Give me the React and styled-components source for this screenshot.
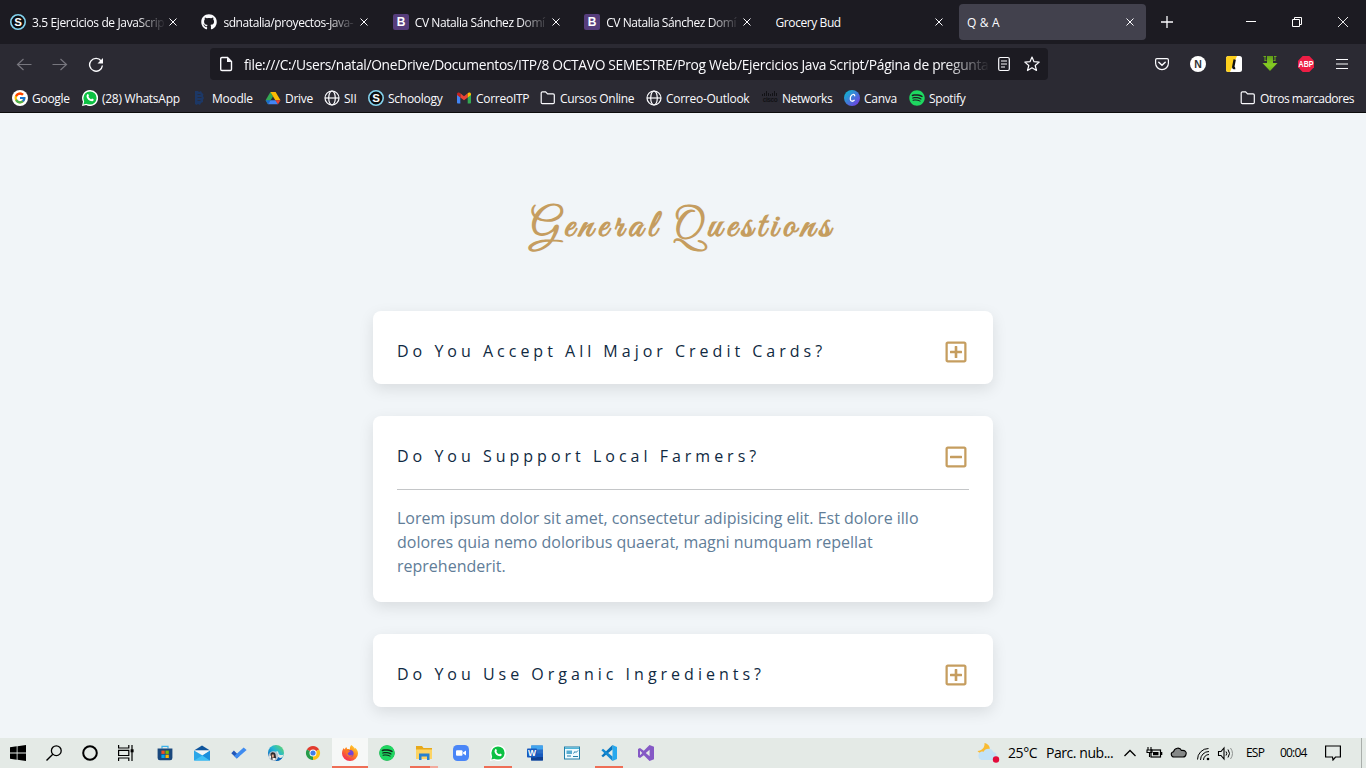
import React from "react";
import styled, { createGlobalStyle, css } from "styled-components";
import { FcGoogle } from "react-icons/fc";
import {
  FaGithub,
  FaSpotify,
  FaRegPlusSquare,
  FaRegMinusSquare,
} from "react-icons/fa";

const GlobalStyle = createGlobalStyle`
  * { box-sizing: border-box; }
  html, body { margin: 0; padding: 0; }
  body {
    width: 1366px;
    height: 768px;
    overflow: hidden;
    background: #f1f5f8;
    font-family: "Open Sans", "Noto Sans", sans-serif;
  }
  svg { display: block; flex: none; }
`;

const Screen = styled.div`
  width: 1366px;
  height: 768px;
  display: flex;
  flex-direction: column;
`;

/* ---------- browser chrome ---------- */

const TabBar = styled.div`
  height: 44px;
  flex: none;
  display: flex;
  align-items: flex-start;
  padding: 4px 0 0 2px;
  background: #1c1b22;
  color: #fbfbfe;
`;

const Tab = styled.div`
  width: 187px;
  height: 36px;
  margin-right: 4.4px;
  padding: 0 9px 0 8px;
  display: flex;
  align-items: center;
  gap: 6px;
  flex: none;
  border-radius: 4px;
  background: ${(p) => (p.$active ? "#42414d" : "transparent")};
`;

const TabTitle = styled.span`
  flex: 1;
  min-width: 0;
  overflow: hidden;
  white-space: nowrap;
  padding-top: 1px;
  font-size: 12px;
  line-height: 18px;
  letter-spacing: ${(p) => p.$ls ?? -0.42}px;
  ${(p) =>
    p.$fade &&
    css`
      mask-image: linear-gradient(to left, transparent 0, #000 30px);
    `}
`;

const TabClose = styled.div`
  width: 14px;
  display: flex;
  justify-content: center;
  margin-left: -6px;
`;

const NewTab = styled.div`
  height: 36px;
  width: 34px;
  display: flex;
  align-items: center;
  justify-content: center;
`;

const WindowButtons = styled.div`
  margin-left: auto;
  height: 36px;
  display: flex;
`;

const WindowButton = styled.div`
  width: 46px;
  display: flex;
  align-items: center;
  justify-content: center;
`;

const NavBar = styled.div`
  height: 40px;
  flex: none;
  display: flex;
  align-items: center;
  background: #2b2a33;
  color: #fbfbfe;
`;

const NavButtons = styled.div`
  width: 210px;
  padding-left: 16px;
  display: flex;
  gap: 20px;
`;

const AddressBar = styled.div`
  width: 838px;
  height: 32px;
  padding: 0 7px 0 8px;
  display: flex;
  align-items: center;
  border-radius: 4px;
  background: #1c1b22;
`;

const Address = styled.span`
  width: 746px;
  margin: 1px 6px 0 10px;
  overflow: hidden;
  white-space: nowrap;
  font-size: 13.8px;
  line-height: 20px;
  letter-spacing: -0.315px;
  mask-image: linear-gradient(to left, transparent 0, #000 45px);
`;

const AddressActions = styled.div`
  display: flex;
  gap: 12px;
`;

const Extensions = styled.div`
  margin-left: auto;
  padding-right: 16px;
  display: flex;
  align-items: center;
  gap: 20px;
`;

const Bookmarks = styled.div`
  height: 29px;
  flex: none;
  display: flex;
  align-items: center;
  padding: 0 12px;
  background: #2b2a33;
  border-bottom: 1px solid #0c0c0d;
  color: #fbfbfe;
`;

const Bookmark = styled.div`
  width: ${(p) => (p.$w ? p.$w + "px" : "auto")};
  display: flex;
  align-items: center;
  gap: 4px;
  flex: none;
  white-space: nowrap;
  font-size: 12px;
  line-height: 18px;
  letter-spacing: ${(p) => p.$ls || -0.27}px;
`;

const BookmarkLabel = styled.span`
  padding-top: 1px;
`;

const Spacer = styled.div`
  flex: 1;
`;

/* ---------- page ---------- */

const Page = styled.main`
  flex: 1;
  min-height: 0;
  overflow: hidden;
  background: #f1f5f8;
  display: flex;
  flex-direction: column;
  align-items: center;
`;

const Heading = styled.h2`
  margin: 80px 0 0;
  height: 118px;
  padding-top: 6px;
  font-family: "Great Vibes", "Liberation Serif", cursive;
  font-weight: 700;
  font-size: 40px;
  line-height: 56px;
  letter-spacing: 5px;
  color: #c59d5f;
  white-space: nowrap;
`;

const Questions = styled.section`
  width: 620px;
  display: flex;
  flex-direction: column;
  gap: 32px;
`;

const Card = styled.article`
  padding: 24px 24px ${(p) => (p.$open ? 24 : 0)}px;
  min-height: 73px;
  background: #fff;
  border-radius: 8px;
  box-shadow: 0 5px 15px rgba(0, 0, 0, 0.1);
`;

const CardHead = styled.div`
  height: 32px;
  display: flex;
  align-items: center;
  justify-content: space-between;
  color: #102a42;
  font-size: 16px;
  letter-spacing: 4px;
  white-space: nowrap;
`;

const Toggle = styled.span`
  height: 24px;
  margin: 2px 1px 0 0;
  color: #c59d5f;
  font-size: 24px;
`;

const Answer = styled.p`
  margin: 17px 0 0;
  padding-top: 16px;
  border-top: 1px solid #c4c6c8;
  color: #617d98;
  font-size: 16px;
  line-height: 24px;
`;

/* ---------- task bar ---------- */

const TaskBar = styled.footer`
  height: 30px;
  flex: none;
  display: flex;
  background: #e4eae6;
  color: #000;
`;

const SystemButtons = styled.div`
  width: 147px;
  display: flex;
`;

const TaskCell = styled.div`
  width: 36px;
  display: flex;
  align-items: center;
  justify-content: center;
`;

const AppCell = styled.div`
  width: 36px;
  height: 30px;
  margin-right: 1px;
  padding-top: 7px;
  display: flex;
  flex-direction: column;
  align-items: center;
  justify-content: space-between;
  background: ${(p) => (p.$active ? "#f6f8f7" : "transparent")};
`;

const Running = styled.div`
  width: ${(p) => (p.$wide ? 36 : 28)}px;
  height: 2px;
  background: ${(p) =>
    p.$stacked
      ? "linear-gradient(to right, #ee6e56 20px, #f2aa9c 20px)"
      : "#ee6e56"};
`;

const Tray = styled.div`
  margin-left: auto;
  display: flex;
  align-items: center;
  white-space: nowrap;
`;

const TrayItem = styled.div`
  width: ${(p) => p.$w}px;
  font-size: ${(p) => p.$size || 12}px;
  letter-spacing: ${(p) => p.$ls || 0}px;
  line-height: 20px;
`;

const DesktopEdge = styled.div`
  width: 5px;
  height: 30px;
  border-left: 1px solid #a9aeab;
`;

/* ---------- icons ---------- */

const Icon = ({ s = 16, box = 16, children }) => (
  <svg width={s} height={s} viewBox={`0 0 ${box} ${box}`} fill="none">
    {children}
  </svg>
);

const Cross = ({ s = 8 }) => (
  <Icon s={s} box={8}>
    <path d="M.5.5l7 7M7.5.5l-7 7" stroke="#fbfbfe" strokeWidth="1" />
  </Icon>
);

const Letter = styled.text`
  font-family: "Liberation Sans", sans-serif;
  font-weight: bold;
  text-anchor: middle;
`;

const SchoologyIcon = () => (
  <Icon>
    <circle cx="8" cy="8" r="7.2" fill="#0c0d10" stroke="#84d3ee" strokeWidth="1.6" />
    <Letter x="8" y="12" fontSize="11.5" fill="#fff">S</Letter>
  </Icon>
);

const BootstrapIcon = () => (
  <Icon>
    <rect width="16" height="16" rx="2" fill="#563d7c" />
    <Letter x="8.2" y="12" fontSize="12" fill="#fff">B</Letter>
  </Icon>
);

const WhatsAppIcon = () => (
  <Icon>
    <path d="M8 0a8 8 0 1 1-3.800 15L0 16l1-4.200A8 8 0 0 1 8 0z" fill="#fff" />
    <circle cx="8" cy="8" r="6.600" fill="#0dc143" />
    <path d="M1.400 14.600l1.100-4 3 3z" fill="#0dc143" />
    <path
      d="M5.200 4.400c.5-.5 1-.4 1.200.1l.5 1.200c.1.3-.5.9-.5 1.100.7 1.300 1.400 1.900 2.600 2.500.3.1.8-.9 1.100-.8l1.400.7c.4.3.1 1.100-.3 1.500-.6.6-1.500.7-2.400.4C6.900 10.500 5.300 9 4.700 7.200c-.3-1 0-2.200.5-2.800z"
      fill="#fff"
    />
  </Icon>
);

const GoogleIcon = () => (
  <Icon>
    <circle cx="8" cy="8" r="8" fill="#fff" />
    <g transform="translate(1.500 1.500)">
      <FcGoogle size={13} />
    </g>
  </Icon>
);

const MoodleIcon = () => (
  <Icon>
    <path d="M3 1h3l1 1 2-1 1 2 1.500 1-.5 2 1 2-1 2v2l-2 1-1 2-2-1-1.500 1L3 14z" fill="#1c3765" />
    <path d="M5.500 4.500h3M5.500 7.500h4M5.500 10.500h3" stroke="#2b2a33" strokeWidth=".8" />
  </Icon>
);

const DriveIcon = () => (
  <Icon>
    <path d="M5.400 2h5.200L8 6.500z" fill="#188038" />
    <path d="M5.400 2L.6 10.300l2.300 3.900L8 6.500z" fill="#34a853" />
    <path d="M10.600 2l4.900 8.300h-5.200L5.400 2z" fill="#fbbc04" />
    <path d="M.6 10.300h4.900L3 14.200z" fill="#1967d2" />
    <path d="M5.500 10.300h5L13 14.200H3z" fill="#4285f4" />
    <path d="M10.300 10.300h5.200L13 14.200z" fill="#ea4335" />
  </Icon>
);

const GlobeIcon = () => (
  <Icon>
    <g stroke="#fbfbfe" strokeWidth="1.200">
      <circle cx="8" cy="8" r="7" />
      <ellipse cx="8" cy="8" rx="3.300" ry="7" />
      <path d="M1 8h14" />
    </g>
  </Icon>
);

const GmailIcon = () => (
  <Icon>
    <path d="M1 4v8.700c0 .5.4.8.8.8H4.300V6.500z" fill="#4285f4" />
    <path d="M15 4v8.700c0 .5-.4.8-.8.8h-2.500V6.500z" fill="#34a853" />
    <path d="M4.300 3.300L8 6.200l3.700-2.900v4.200L8 10.300 4.300 7.500z" fill="#ea4335" />
    <path d="M1 4c0-1.400 1.500-2 2.500-1.300l.8.600v4.200L1 5z" fill="#c5221f" />
    <path d="M15 4c0-1.400-1.500-2-2.500-1.300l-.8.600v4.200L15 5z" fill="#fbbc04" />
  </Icon>
);

const FolderOutline = () => (
  <Icon>
    <path
      d="M1.200 12.500V3c0-.7.500-1.200 1.200-1.200h3.200l2 2h5.500c.7 0 1.200.5 1.200 1.200v7.500c0 .7-.5 1.200-1.200 1.200H2.400c-.7 0-1.200-.5-1.200-1.200z"
      stroke="#fbfbfe"
      strokeWidth="1.200"
    />
  </Icon>
);

const CiscoIcon = () => (
  <Icon>
    <path
      d="M.5 4v2M2.500 3v3M4.500 1v5M6.500 3v3M8.500 4v2M10.500 3v3M12.500 1v5M14.500 3v3"
      stroke="#121216"
      strokeWidth="1"
    />
    <Letter x="8" y="12" fontSize="6.500" fill="#121216">cisco</Letter>
  </Icon>
);

const CanvaIcon = () => (
  <Icon>
    <defs>
      <linearGradient id="canva" x1="0" y1="0" x2="1" y2="1">
        <stop offset=".15" stopColor="#16acd0" />
        <stop offset=".9" stopColor="#7140e2" />
      </linearGradient>
    </defs>
    <circle cx="8" cy="8" r="8" fill="url(#canva)" />
    <path d="M10.500 6.200c.6-1.400-.5-2.100-1.600-1.700C7.300 5 6.200 7.300 6.300 9.300c.2 2.300 2.400 2.600 4.300.6" stroke="#fff" strokeWidth="1.300" />
  </Icon>
);

const Spotify = ({ dark }) => (
  <Icon>
    <circle cx="8" cy="8" r="7.500" fill={dark} />
    <FaSpotify size={16} color="#1ed760" />
  </Icon>
);

const PocketIcon = () => (
  <Icon>
    <path
      d="M1.600 4c0-.8.5-1.300 1.300-1.300h10.200c.8 0 1.300.5 1.300 1.300v3.200a6.400 6.400 0 0 1-12.800 0z"
      stroke="#fbfbfe"
      strokeWidth="1.200"
    />
    <path d="M4.800 6.200L8 9.200l3.200-3" stroke="#fbfbfe" strokeWidth="1.500" strokeLinecap="round" />
  </Icon>
);

const NIcon = () => (
  <Icon>
    <circle cx="8" cy="8" r="8" fill="#fff" />
    <Letter x="8" y="11.800" fontSize="10.500" fill="#333">N</Letter>
  </Icon>
);

const LIcon = () => (
  <Icon>
    <rect width="16" height="16" rx="2.500" fill="#fff" />
    <path d="M2.500 0H11L4 16H2.500A2.500 2.500 0 0 1 0 13.500v-11A2.500 2.500 0 0 1 2.500 0z" fill="#fdd01d" />
    <path d="M8.700 3.500L7.200 11c0 1 .5 1.300 2 1" stroke="#111" strokeWidth="2.400" />
  </Icon>
);

const DownloadArrow = () => (
  <Icon>
    <defs>
      <linearGradient id="arrow" x1="0" y1="0" x2="0" y2="1">
        <stop offset="0" stopColor="#5f9c17" />
        <stop offset=".6" stopColor="#86cc24" />
        <stop offset="1" stopColor="#6bb01c" />
      </linearGradient>
    </defs>
    <path d="M5 0h6v7h4.500L8 15 .5 7H5z" fill="url(#arrow)" />
    <path d="M1.500.5H4M12 .5h2.500M2.500 4.500h2M11.500 4.500h2" stroke="#6aa81c" />
    <path d="M3 1v3.500M13 1v3.500" stroke="#6aa81c" />
  </Icon>
);

const AbpIcon = () => (
  <Icon>
    <path d="M4.700 0h6.600L16 4.700v6.600L11.300 16H4.700L0 11.300V4.700z" fill="#ed1e45" />
    <g transform="translate(8 11.200) scale(.8 1)">
      <Letter x="0" y="0" fontSize="8.800" fill="#fff">ABP</Letter>
    </g>
  </Icon>
);

const WindowsLogo = () => (
  <Icon>
    <path d="M0 2.300l6.700-1v6.300H0zM7.500 1.200L16 0v7.600H7.500zM0 8.400h6.700v6.300L0 13.700zM7.500 8.400H16V16l-8.500-1.200z" fill="#000" />
  </Icon>
);

const SearchIcon = () => (
  <Icon>
    <circle cx="10.300" cy="5.700" r="4.900" stroke="#000" strokeWidth="1.300" />
    <path d="M6.800 9.200L.5 15.500" stroke="#000" strokeWidth="1.400" />
  </Icon>
);

const TaskViewIcon = () => (
  <Icon>
    <path d="M.6 0v3h10.200V0M.6 16v-3h10.200v3M.6 5.300h10.200v5.200H.6zM14 0v16" stroke="#000" strokeWidth="1.200" />
    <rect x="12.600" y="4.300" width="3" height="3" fill="#000" />
  </Icon>
);

const StoreIcon = () => (
  <Icon>
    <path d="M5 3.500V1.300h6v2.200" stroke="#3cb2ec" strokeWidth="1.200" />
    <path d="M.6 3.500h14.800V13a2.300 2.300 0 0 1-2.300 2.300H2.900A2.300 2.300 0 0 1 .6 13z" fill="#1a487c" />
    <path d="M4.400 5.600h3.300v3.300H4.400z" fill="#f25022" />
    <path d="M8.500 5.600h3.300v3.300H8.500z" fill="#7fba00" />
    <path d="M4.400 9.700h3.300V13H4.400z" fill="#00a4ef" />
    <path d="M8.500 9.700h3.300V13H8.500z" fill="#ffb900" />
  </Icon>
);

const MailIcon = () => (
  <Icon>
    <path d="M0 5.500L8 .4l8 5.100H0z" fill="#0f559c" />
    <path d="M0 5.500h16L8.500 10z" fill="#f3f6f8" />
    <path d="M0 5.500l8.500 5L16 5.800v9.700H0z" fill="#2ba6e8" />
    <path d="M0 15.500l8.500-5 7.500 5z" fill="#40c0f5" />
    <path d="M16 5.800v9.700l-7.500-5z" fill="#1c8fdc" />
  </Icon>
);

const TodoIcon = () => (
  <Icon>
    <path d="M.3 8.200l2.600-2.600L8.400 11 5.800 13.600z" fill="#2257b8" />
    <path d="M5.800 13.600L3.200 11l9.500-8.600 2.900 2.700z" fill="#3f8cf0" />
  </Icon>
);

const EdgeIcon = () => (
  <Icon>
    <defs>
      <linearGradient id="edge" x1="0" y1="1" x2="1" y2="0">
        <stop offset=".2" stopColor="#0b72c5" />
        <stop offset=".55" stopColor="#23b7d5" />
        <stop offset="1" stopColor="#6adb59" />
      </linearGradient>
    </defs>
    <circle cx="8" cy="8" r="8" fill="url(#edge)" />
    <path d="M8.500 6c2.500 0 1.500 3 3 3.700 1.200.6 3 .5 4.200-.2-.5 1.500-1.500 3-2.500 3.800-2 .3-4.200-1.300-4.700-3.300z" fill="#e4eae6" />
    <path d="M9 11c1.500 2 3.500 2.500 5.500 1.500-1.500 2.500-4 3.500-6.500 3.500z" fill="#0d62b5" />
    <circle cx="5.500" cy="11" r="4.800" fill="#b8c5cf" />
    <path d="M2.500 9c.5-2.500 4.500-2.500 5 .5l.5 3-1 3-3.500-.8z" fill="#2e2a2c" />
    <path d="M3.800 9.500h2v3h-2z" fill="#dfa98c" />
    <path d="M4.500 13h3v2.500h-3zM1.500 11h1.500v2H1.500z" fill="#f0f0f0" />
  </Icon>
);

const ChromeIcon = () => (
  <Icon>
    <path d="M8 8L1.900 4.500A7 7 0 0 1 14.100 4.500z" fill="#e23b2e" />
    <path d="M8 8L14.100 4.500A7 7 0 0 1 8 15z" fill="#fbc116" />
    <path d="M8 8v7A7 7 0 0 1 1.900 4.500z" fill="#269b49" />
    <circle cx="8" cy="8" r="3.500" fill="#fff" />
    <circle cx="8" cy="8" r="2.600" fill="#3f7de8" />
  </Icon>
);

const FirefoxIcon = () => (
  <Icon>
    <defs>
      <linearGradient id="fox" x1=".9" y1="0" x2=".2" y2="1">
        <stop offset="0" stopColor="#ffdf3a" />
        <stop offset=".45" stopColor="#ff8a1c" />
        <stop offset="1" stopColor="#f4205c" />
      </linearGradient>
    </defs>
    <path d="M9.200 0c2 1 3.200 2.800 3.500 4 .2-.5.1-1 0-1.500C15 4 16 6.200 16 8.500a8 7.500 0 0 1-16 0C0 6 .8 4.300 1.800 3L2.500 4.500 4.200 2l1 2c1.400 0 2 .1 2.800.4C7.600 3 8.300 1 9.200 0z" fill="url(#fox)" />
    <circle cx="8" cy="8.500" r="3.600" fill="#7344d8" />
    <path d="M3.800 6c1.800-1.200 4-.9 4.800.6-2-.3-1.600 1.700-3 1.700.5 2.500 3.500 3 5.300 1.300C9.600 13.700 3.500 12.500 3.800 6z" fill="#ff7627" />
  </Icon>
);

const ExplorerIcon = () => (
  <Icon>
    <path d="M0 1h6l1.500 2H16v11H0z" fill="#e7a91b" />
    <path d="M0 4.500h16V14H0z" fill="#fcd464" />
    <path d="M3 8.500h10.500V15H11v-3.500H5.500V15H3z" fill="#2781cf" />
  </Icon>
);

const ZoomIcon = () => (
  <Icon>
    <rect width="16" height="16" rx="4.500" fill="#4a86f7" />
    <rect x="3" y="5.200" width="6.500" height="5.600" rx="1" fill="#fff" />
    <path d="M10 7.400l3-2v5.200l-3-2z" fill="#fff" />
  </Icon>
);

const WordIcon = () => (
  <Icon>
    <rect x="4" y=".5" width="12" height="15" rx="1" fill="#2a6cc6" />
    <path d="M4 .5h12V4.500H4z" fill="#41a5ee" />
    <path d="M4 8.500h12v3.500H4z" fill="#185abd" />
    <path d="M4 12h12v3.500H4z" fill="#103f91" />
    <rect x="0" y="3.500" width="10" height="9" rx=".8" fill="#185abd" />
    <Letter x="5" y="11" fontSize="8.500" fill="#fff">W</Letter>
  </Icon>
);

const PanelIcon = () => (
  <Icon>
    <rect x=".5" y="2" width="15" height="12" fill="#eefaff" stroke="#217fa9" />
    <path d="M1 2.500h14v1.500H1z" fill="#50b6d8" />
    <rect x="2.500" y="5.500" width="5.500" height="3.500" fill="#55abd0" />
    <path d="M9.500 8.500l1.500-2 1 1 2-2M3 11h4M9 11.500h5" stroke="#217fa9" />
  </Icon>
);

const VsCodeIcon = () => (
  <Icon>
    <path d="M11.500 0L16 2v12l-4.500 2z" fill="#27a9ee" />
    <path d="M11.500 0v4.500L2 12.200.4 10.800z" fill="#0a76be" />
    <path d="M11.500 16v-4.500L2 3.800.4 5.200z" fill="#1389d2" />
  </Icon>
);

const VisualStudioIcon = () => (
  <Icon>
    <path d="M11.500 0L16 1.800v12.400L11.500 16 5.800 10.200 2 13 0 12V4l2-1 3.800 2.800zM11.600 4.700L7.800 8l3.800 3.300zM2 5.700v4.600L4.300 8z" fill="#8559c5" fillRule="evenodd" />
  </Icon>
);

const WeatherIcon = () => (
  <svg width="24" height="24" viewBox="0 0 24 24" fill="none">
    <path d="M7.500 2c5 1 7 6 3.500 9s-8 2-10.500-1C5 9.500 8 6.500 7.500 2z" fill="#f9bb32" />
    <path d="M4.500 19a4.500 4.500 0 0 1 0-8.500c1 0 1.500 0 2 .3a5.500 5.500 0 0 1 10 .2 4.200 4.200 0 0 1 .5 8z" fill="#c3e2f6" />
    <circle cx="19" cy="18.500" r="3.200" fill="#e30b3b" />
  </svg>
);

const TrayIcons = () => (
  <svg width="112" height="20" viewBox="0 0 112 20" fill="none" stroke="#000">
    <path d="M.5 13l5.500-5.500L11.500 13" strokeWidth="1.300" />
    <rect x="27" y="7" width="9.500" height="7" strokeWidth="1.200" />
    <path d="M29 9h5.500v3.200H29zM37 9h1.300v3H37z" fill="#000" stroke="none" />
    <path d="M24 4v3M27 4v3M23 7h5v2.500h-5zM25.500 9v5" strokeWidth="1.100" />
    <path d="M50 14c-3 0-4-4.500-.5-5.200C50.500 4.500 56 4 57.500 7.500c3.500-.5 5.500 1.500 4.500 4-.4 1.600-1.400 2.500-3 2.500z" fill="#858887" strokeWidth="1.100" />
    <path d="M73.500 16.500a11 11 0 0 1 11-11M76.500 17a8.500 8.500 0 0 1 8.500-8.500M79.500 17a5.500 5.500 0 0 1 5.500-5.500" strokeWidth="1" />
    <circle cx="84" cy="16" r="1.300" fill="#000" stroke="none" />
    <path d="M94.500 8.500H97l3-3.500v11l-3-3.500h-2.500z" strokeWidth="1.100" />
    <path d="M102 8.500q1.500 2 0 4M104 6.500q3 4 0 8" />
    <path d="M106.500 5q4 5.500 0 11" stroke="#8e9290" />
  </svg>
);

/* ---------- data ---------- */

const tabs = [
  { title: "3.5 Ejercicios de JavaScrip", icon: <SchoologyIcon />, fade: true, ls: -0.37 },
  { title: "sdnatalia/proyectos-java-", icon: <FaGithub size={16} />, fade: true },
  { title: "CV Natalia Sánchez Domí", icon: <BootstrapIcon />, fade: true },
  { title: "CV Natalia Sánchez Domí", icon: <BootstrapIcon />, fade: true },
  { title: "Grocery Bud" },
  { title: "Q & A", active: true, ls: 0.2 },
];

const bookmarks = [
  { label: "Google", w: 70, icon: <GoogleIcon /> },
  { label: "(28) WhatsApp", w: 110, icon: <WhatsAppIcon /> },
  { label: "Moodle", w: 73, icon: <MoodleIcon /> },
  { label: "Drive", w: 59, icon: <DriveIcon /> },
  { label: "SII", w: 44, icon: <GlobeIcon /> },
  { label: "Schoology", w: 88, icon: <SchoologyIcon /> },
  { label: "CorreoITP", w: 84, icon: <GmailIcon /> },
  { label: "Cursos Online", w: 106, icon: <FolderOutline />, ls: -0.32 },
  { label: "Correo-Outlook", w: 116, icon: <GlobeIcon /> },
  { label: "Networks", w: 82, icon: <CiscoIcon />, ls: -0.4 },
  { label: "Canva", w: 65, icon: <CanvaIcon /> },
  { label: "Spotify", w: 60, icon: <Spotify dark="#1c1b22" /> },
];

const questions = [
  { title: "Do You Accept All Major Credit Cards?" },
  {
    title: "Do You Suppport Local Farmers?",
    answer:
      "Lorem ipsum dolor sit amet, consectetur adipisicing elit. Est dolore illo dolores quia nemo doloribus quaerat, magni numquam repellat reprehenderit.",
  },
  { title: "Do You Use Organic Ingredients?" },
];

const apps = [
  { id: "store", icon: <StoreIcon /> },
  { id: "mail", icon: <MailIcon /> },
  { id: "todo", icon: <TodoIcon /> },
  { id: "edge", icon: <EdgeIcon /> },
  { id: "chrome", icon: <ChromeIcon /> },
  { id: "firefox", icon: <FirefoxIcon />, running: true, active: true },
  { id: "spotify", icon: <Spotify dark="#10271a" /> },
  { id: "explorer", icon: <ExplorerIcon />, running: true, stacked: true },
  { id: "zoom", icon: <ZoomIcon /> },
  { id: "whatsapp", icon: <WhatsAppIcon />, running: true },
  { id: "word", icon: <WordIcon /> },
  { id: "panel", icon: <PanelIcon /> },
  { id: "vscode", icon: <VsCodeIcon />, running: true },
  { id: "vs", icon: <VisualStudioIcon /> },
];

export default function App() {
  return (
    <Screen>
      <GlobalStyle />
      <TabBar>
        {tabs.map((t, i) => (
          <Tab key={i} $active={t.active}>
            {t.icon}
            <TabTitle $fade={t.fade} $ls={t.ls}>{t.title}</TabTitle>
            <TabClose>
              <Cross />
            </TabClose>
          </Tab>
        ))}
        <NewTab>
          <Icon s={12} box={12}>
            <path d="M6 0v12M0 6h12" stroke="#fbfbfe" strokeWidth="1.300" />
          </Icon>
        </NewTab>
        <WindowButtons>
          <WindowButton>
            <Icon s={10} box={10}>
              <path d="M0 4.500h10" stroke="#fff" />
            </Icon>
          </WindowButton>
          <WindowButton>
            <Icon s={10} box={10}>
              <path d="M.5 2.500h7v7h-7zM2.500 2.500v-2h7v7h-2" stroke="#fff" />
            </Icon>
          </WindowButton>
          <WindowButton>
            <Icon s={10} box={10}>
              <path d="M0 0l10 10M10 0L0 10" stroke="#fff" strokeWidth=".9" />
            </Icon>
          </WindowButton>
        </WindowButtons>
      </TabBar>

      <NavBar>
        <NavButtons>
          <Icon>
            <path d="M15.500 8.500H1.500M7.500 3L1.500 8.500l6 5.500" stroke="#77767e" strokeWidth="1.200" />
          </Icon>
          <Icon>
            <path d="M.5 8.500h14M8.500 3l6 5.500-6 5.500" stroke="#77767e" strokeWidth="1.200" />
          </Icon>
          <Icon>
            <path d="M13.200 5A6.400 6.400 0 1 0 14.400 9.500" stroke="#fbfbfe" strokeWidth="1.400" />
            <path d="M15 2v5.500H9.500z" fill="#fbfbfe" />
          </Icon>
        </NavButtons>
        <AddressBar>
          <Icon>
            <path
              d="M2.700 13.200V2.800c0-.8.5-1.300 1.300-1.300h5.500l4 4v7.700c0 .8-.5 1.300-1.300 1.300H4c-.8 0-1.300-.5-1.300-1.300z"
              stroke="#fbfbfe"
              strokeWidth="1.400"
            />
            <path d="M9 1.500V6h4.500z" fill="#fbfbfe" />
          </Icon>
          <Address>
            file:///C:/Users/natal/OneDrive/Documentos/ITP/8 OCTAVO SEMESTRE/Prog Web/Ejercicios Java Script/Página de pregunta
          </Address>
          <AddressActions>
            <Icon>
              <rect x="2.700" y="1.500" width="10.600" height="13" rx="1.500" stroke="#fbfbfe" strokeWidth="1.200" />
              <path d="M5 5h6M5 8h6M5 11h4" stroke="#fbfbfe" strokeWidth="1.200" />
            </Icon>
            <Icon>
              <path
                d="M8 1l2 4.700 5.200.4-4 3.400 1.300 5L8 11.800l-4.500 2.700 1.300-5-4-3.400L6 5.700z"
                stroke="#fbfbfe"
                strokeWidth="1.200"
                strokeLinejoin="round"
              />
            </Icon>
          </AddressActions>
        </AddressBar>
        <Extensions>
          <PocketIcon />
          <NIcon />
          <LIcon />
          <DownloadArrow />
          <AbpIcon />
          <Icon>
            <path d="M2 3.500h12M2 8h12M2 12.500h12" stroke="#fbfbfe" strokeWidth="1.200" />
          </Icon>
        </Extensions>
      </NavBar>

      <Bookmarks>
        {bookmarks.map((b) => (
          <Bookmark key={b.label} $w={b.w} $ls={b.ls}>
            {b.icon}
            <BookmarkLabel>{b.label}</BookmarkLabel>
          </Bookmark>
        ))}
        <Spacer />
        <Bookmark $ls={-0.48}>
          <FolderOutline />
          <BookmarkLabel>Otros marcadores</BookmarkLabel>
        </Bookmark>
      </Bookmarks>

      <Page>
        <Heading>General Questions</Heading>
        <Questions>
          {questions.map((q) => (
            <Card key={q.title} $open={!!q.answer}>
              <CardHead>
                {q.title}
                <Toggle>{q.answer ? <FaRegMinusSquare /> : <FaRegPlusSquare />}</Toggle>
              </CardHead>
              {q.answer && <Answer>{q.answer}</Answer>}
            </Card>
          ))}
        </Questions>
      </Page>

      <TaskBar>
        <SystemButtons>
          <TaskCell><WindowsLogo /></TaskCell>
          <TaskCell><SearchIcon /></TaskCell>
          <TaskCell>
            <Icon>
              <circle cx="8" cy="8" r="6.800" stroke="#000" strokeWidth="2" />
            </Icon>
          </TaskCell>
          <TaskCell><TaskViewIcon /></TaskCell>
        </SystemButtons>
        {apps.map((a) => (
          <AppCell key={a.id} $active={a.active}>
            {a.icon}
            {a.running && <Running $wide={a.active} $stacked={a.stacked} />}
          </AppCell>
        ))}
        <Tray>
          <TrayItem $w={31}><WeatherIcon /></TrayItem>
          <TrayItem $w={38} $size={14} $ls={-0.4}>25°C</TrayItem>
          <TrayItem $w={78} $size={14} $ls={-0.45}>Parc. nub...</TrayItem>
          <TrayItem $w={122}><TrayIcons /></TrayItem>
          <TrayItem $w={34} $ls={-0.8}>ESP</TrayItem>
          <TrayItem $w={45} $ls={-0.8}>00:04</TrayItem>
          <TrayItem $w={36}>
            <Icon>
              <path d="M.6 1h14.800v11H10.500L8 15l-.5-3H.6z" stroke="#000" strokeWidth="1.200" />
            </Icon>
          </TrayItem>
          <DesktopEdge />
        </Tray>
      </TaskBar>
    </Screen>
  );
}
